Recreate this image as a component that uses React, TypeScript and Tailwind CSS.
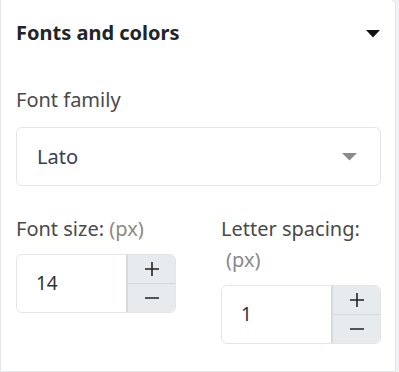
import React from "react";

function Stepper({ value }: { value: string }) {
  return (
    <div className="flex h-[59px] w-[160px] rounded-[6px] border border-[#e3e5e8] bg-white">
      <div className="flex flex-1 items-center pl-[19px] text-[19px] text-[#333]">{value}</div>
      <div className="flex w-[49px] flex-col overflow-hidden rounded-r-[5px] border-l-2 border-[#d6d9dd] bg-[#e8ebee]">
        <div className="flex flex-1 items-center justify-center border-b border-[#d6d9dd]">
          <svg width="16" height="16" viewBox="0 0 16 16">
            <path d="M8 1v14M1 8h14" stroke="#222" strokeWidth="1.6" />
          </svg>
        </div>
        <div className="flex flex-1 items-center justify-center">
          <svg width="16" height="16" viewBox="0 0 16 16">
            <path d="M1 8h14" stroke="#222" strokeWidth="1.6" />
          </svg>
        </div>
      </div>
    </div>
  );
}

export default function App() {
  return (
    <div className="h-[372px] w-[399px] bg-[#f0f1f3]" style={{ fontFamily: '"Noto Sans", sans-serif' }}>
      <div className="h-[373px] w-[396px] -translate-y-px rounded-tr-[6px] border border-[#e3e5e8] bg-white">
        <div className="flex h-[66px] items-center justify-between pl-[15px] pr-[15px]">
          <div className="text-[20px] font-bold leading-[28px] text-[#212529]">Fonts and colors</div>
          <svg width="14" height="8" viewBox="0 0 14 8" className="mt-[2px]">
            <path d="M0 0h14L7 7.5z" fill="#111" />
          </svg>
        </div>
        <div className="px-[15px]">
          <div className="mt-[18px] text-[20px] leading-[31px] text-[#4a4a4a]">Font family</div>
          <div className="mt-[12px] flex h-[59px] w-[365px] items-center justify-between rounded-[6px] border border-[#e3e5e8] pl-[20px] pr-[23px]">
            <span className="text-[20px] text-[#34405a]">Lato</span>
            <svg width="15" height="8" viewBox="0 0 15 8">
              <path d="M0 0h15L7.5 7.5z" fill="#8a8a8a" />
            </svg>
          </div>
          <div className="mt-[27px] flex gap-[45px]">
            <div className="w-[160px]">
              <div className="text-[20px] leading-[31px] text-[#4a4a4a]">
                Font size: <span className="text-[#8a8a8a]">(px)</span>
              </div>
              <div className="mt-[10px]">
                <Stepper value="14" />
              </div>
            </div>
            <div className="w-[160px]">
              <div className="text-[20px] leading-[31px] text-[#4a4a4a]">
                Letter spacing: <span className="pl-[5px] text-[#8a8a8a]">(px)</span>
              </div>
              <div className="mt-[10px]">
                <Stepper value="1" />
              </div>
            </div>
          </div>
        </div>
      </div>
    </div>
  );
}
